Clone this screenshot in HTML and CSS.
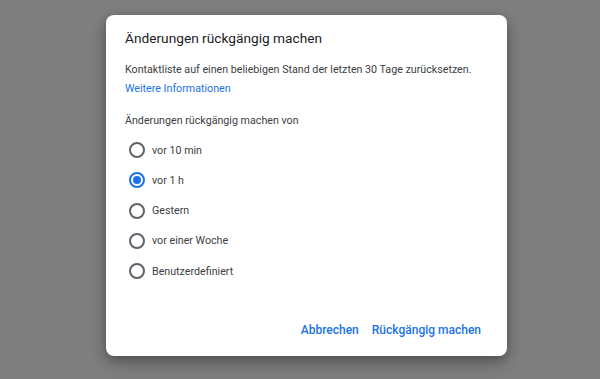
FILE: index.html
```html
<!DOCTYPE html>
<html lang="de">
<head>
<meta charset="utf-8">
<link rel="stylesheet" href="styles.css">
</head>
<body>
<div class="dialog">
  <h1 class="title">Änderungen rückgängig machen</h1>
  <p class="desc">Kontaktliste auf einen beliebigen Stand der letzten 30 Tage zurücksetzen.</p>
  <a class="link">Weitere Informationen</a>
  <p class="label">Änderungen rückgängig machen von</p>
  <div class="options">
    <div class="option"><span class="radio"></span><span>vor 10 min</span></div>
    <div class="option"><span class="radio checked"></span><span>vor 1 h</span></div>
    <div class="option"><span class="radio"></span><span>Gestern</span></div>
    <div class="option"><span class="radio"></span><span>vor einer Woche</span></div>
    <div class="option"><span class="radio"></span><span>Benutzerdefiniert</span></div>
  </div>
  <div class="actions">
    <button class="btn">Abbrechen</button>
    <button class="btn">Rückgängig machen</button>
  </div>
</div>
</body>
</html>
```
FILE: styles.css
```css
html, body {
  margin: 0;
  height: 100%;
}
body {
  background: #7f7f7f;
  font-family: Roboto, "Liberation Sans", sans-serif;
  color: #3c4043;
  display: flex;
  align-items: flex-start;
  justify-content: flex-start;
  padding: 15px 0 0 106px;
  box-sizing: border-box;
}
.dialog {
  width: 401px;
  height: 341px;
  box-sizing: border-box;
  background: #fff;
  border-radius: 8px;
  box-shadow: 0 4px 12px rgba(0,0,0,0.3), 0 8px 24px rgba(0,0,0,0.15);
  padding: 0 24px 0 19px;
  display: flex;
  flex-direction: column;
}
.title {
  margin: 13px 0 0;
  font-size: 13.7px;
  font-weight: 400;
  line-height: 20px;
  color: #202124;
}
.desc {
  margin: 13px 0 0;
  font-size: 10.7px;
  line-height: 18px;
  color: #3c4043;
}
.link {
  margin-top: 1px;
  font-size: 10.7px;
  line-height: 18px;
  color: #1a73e8;
}
.label {
  margin: 14px 0 0;
  font-size: 10.7px;
  line-height: 18px;
}
.options {
  margin-top: 5px;
  display: flex;
  flex-direction: column;
}
.option {
  height: 30.25px;
  display: flex;
  align-items: center;
  gap: 7px;
  font-size: 10.7px;
  padding-left: 4px;
}
.radio {
  width: 16px;
  height: 16px;
  box-sizing: border-box;
  border: 2px solid #5f6368;
  border-radius: 50%;
  position: relative;
  flex: none;
}
.radio.checked {
  border-color: #1a73e8;
}
.radio.checked::after {
  content: "";
  position: absolute;
  left: 2px;
  top: 2px;
  width: 8px;
  height: 8px;
  border-radius: 50%;
  background: #1a73e8;
}
.actions {
  margin-top: auto;
  margin-bottom: 12px;
  display: flex;
  justify-content: flex-end;
  gap: 1px;
  margin-right: -4px;
}
.btn {
  background: none;
  border: none;
  font-family: inherit;
  font-size: 12px;
  font-weight: 500;
  color: #1a73e8;
  padding: 6px 6px;
  line-height: 16px;
}
```
